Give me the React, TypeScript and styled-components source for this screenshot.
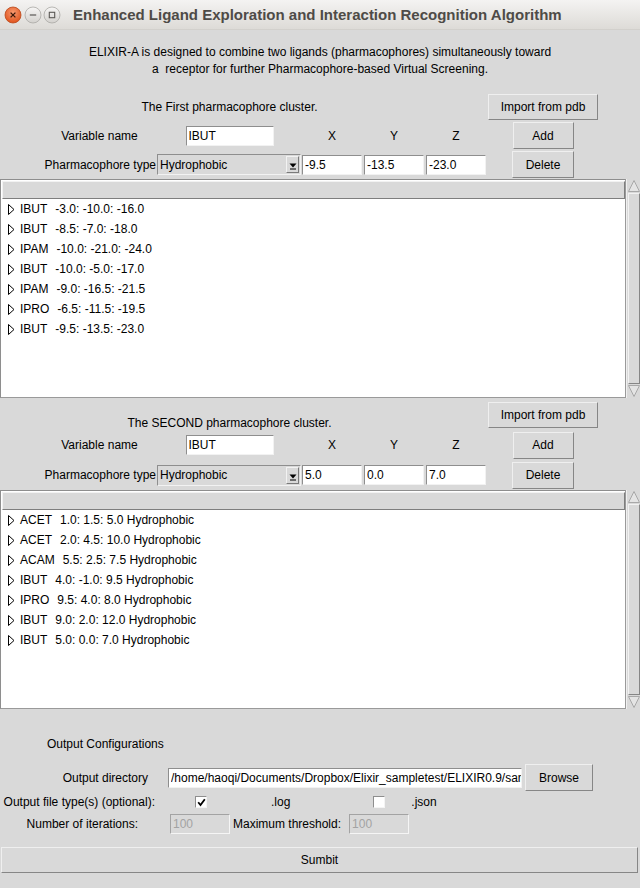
import React from "react";
import styled, { createGlobalStyle } from "styled-components";

type Point = { name: string; coords: string };

const firstCluster: Point[] = [
  { name: "IBUT", coords: "-3.0: -10.0: -16.0" },
  { name: "IBUT", coords: "-8.5: -7.0: -18.0" },
  { name: "IPAM", coords: "-10.0: -21.0: -24.0" },
  { name: "IBUT", coords: "-10.0: -5.0: -17.0" },
  { name: "IPAM", coords: "-9.0: -16.5: -21.5" },
  { name: "IPRO", coords: "-6.5: -11.5: -19.5" },
  { name: "IBUT", coords: "-9.5: -13.5: -23.0" },
];

const secondCluster: Point[] = [
  { name: "ACET", coords: "1.0: 1.5: 5.0 Hydrophobic" },
  { name: "ACET", coords: "2.0: 4.5: 10.0 Hydrophobic" },
  { name: "ACAM", coords: "5.5: 2.5: 7.5 Hydrophobic" },
  { name: "IBUT", coords: "4.0: -1.0: 9.5 Hydrophobic" },
  { name: "IPRO", coords: "9.5: 4.0: 8.0 Hydrophobic" },
  { name: "IBUT", coords: "9.0: 2.0: 12.0 Hydrophobic" },
  { name: "IBUT", coords: "5.0: 0.0: 7.0 Hydrophobic" },
];

const GlobalStyle = createGlobalStyle`
  html, body {
    margin: 0;
    padding: 0;
    background: #d9d9d9;
  }
  body {
    font-family: "Liberation Sans", Arial, sans-serif;
    font-size: 12px;
    color: #000;
  }
  * {
    box-sizing: border-box;
  }
`;

const Window = styled.div`
  width: 640px;
  height: 888px;
  overflow: hidden;
  background: #d9d9d9;
  display: flex;
  flex-direction: column;
`;

const TitleBar = styled.div`
  height: 30px;
  flex: none;
  display: flex;
  align-items: center;
  padding-left: 4px;
  background: linear-gradient(#f4f3f2, #dddbd7);
  border-bottom: 1px solid #d2d0cc;
`;

const WinButton = styled.svg<{ $ml?: number }>`
  flex: none;
  margin-left: ${(p) => p.$ml ?? 0}px;
`;

const WindowTitle = styled.div`
  margin-left: 12px;
  font-family: "Liberation Sans", Arial, sans-serif;
  font-weight: bold;
  font-size: 15px;
  color: #4e4b47;
  white-space: nowrap;
`;

const Intro = styled.div`
  padding: 14px 0 14px;
  text-align: center;
  line-height: 17px;
  white-space: pre;
`;

const ClusterGrid = styled.div<{ $rowH: number; $mt?: number }>`
  display: grid;
  margin-left: 42px;
  margin-top: ${(p) => p.$mt ?? 0}px;
  grid-template-columns: 115px 145px 62px 62px 62px 110px;
  grid-auto-rows: ${(p) => p.$rowH}px;
  align-items: center;
`;

const Heading = styled.div<{ $low?: boolean }>`
  grid-column: 2;
  justify-self: center;
  align-self: ${(p) => (p.$low ? "end" : "center")};
  line-height: 14px;
  white-space: nowrap;
`;

const FieldLabel = styled.div<{ $right?: boolean }>`
  justify-self: ${(p) => (p.$right ? "end" : "center")};
  margin-right: ${(p) => (p.$right ? 1 : 0)}px;
  white-space: nowrap;
`;

const AxisLabel = styled.div`
  justify-self: center;
  margin-right: 2px;
`;

const Entry = styled.input<{ $w: number; $center?: boolean; $ml?: number }>`
  width: ${(p) => p.$w}px;
  height: 20px;
  margin-left: ${(p) => p.$ml ?? 0}px;
  justify-self: ${(p) => (p.$center ? "center" : "start")};
  padding: 0 0 0 2px;
  font: 12px "Liberation Sans", Arial, sans-serif;
  color: #000;
  background: #fff;
  border: 1px solid;
  border-color: #8e8e8e #f2f2f2 #f2f2f2 #8e8e8e;
  border-radius: 0;
  outline: none;

  &:disabled {
    background: #d9d9d9;
    color: #a3a3a3;
    border-color: #a3a3a3 #f5f5f5 #f5f5f5 #a3a3a3;
  }
`;

const TkButton = styled.button<{ $w?: number; $h?: number; $col?: number; $ml?: number }>`
  ${(p) => (p.$col ? `grid-column: ${p.$col};` : "")}
  justify-self: center;
  width: ${(p) => (p.$w ? `${p.$w}px` : "auto")};
  height: ${(p) => p.$h ?? 26}px;
  margin-left: ${(p) => p.$ml ?? 0}px;
  padding: 0;
  font: 12px "Liberation Sans", Arial, sans-serif;
  color: #000;
  background: #d9d9d9;
  border: 1px solid;
  border-color: #efefef #868686 #868686 #efefef;
  border-radius: 0;
`;

const Combo = styled.div`
  width: 144px;
  height: 21px;
  display: flex;
  align-items: center;
  padding-left: 2px;
  background: #d9d9d9;
  border: 1px solid;
  border-color: #8e8e8e #f2f2f2 #f2f2f2 #8e8e8e;
`;

const ComboText = styled.span`
  flex: 1;
`;

const ComboArrow = styled.span`
  width: 13px;
  height: 17px;
  margin-right: 1px;
  display: flex;
  align-items: flex-end;
  justify-content: center;
  padding-bottom: 2px;
  border: 1px solid;
  border-color: #f2f2f2 #7a7a7a #7a7a7a #f2f2f2;
`;

const ListFrame = styled.div<{ $h: number }>`
  display: flex;
  height: ${(p) => p.$h}px;
  flex: none;
`;

const ListBody = styled.div`
  flex: 1;
  display: flex;
  flex-direction: column;
  background: #fff;
  border: 1px solid;
  border-color: #8e8e8e #9a9a9a #9a9a9a #8e8e8e;
  padding: 1px 0 0 1px;
  overflow: hidden;
`;

const ListHeader = styled.div`
  height: 18px;
  flex: none;
  background: #d9d9d9;
  border: 1px solid;
  border-color: #f2f2f2 #7e7e7e #7e7e7e #f2f2f2;
`;

const Item = styled.div`
  height: 20px;
  flex: none;
  display: flex;
  align-items: center;
  padding-left: 6px;
  white-space: pre;
`;

const Coords = styled.span`
  margin-left: 8px;
`;

const ScrollBar = styled.div`
  width: 14px;
  flex: none;
  display: flex;
  flex-direction: column;
  padding: 1px 0 1px 1px;
  background: #d9d9d9;
  border-left: 1px solid #f0f0f0;
`;

const ScrollThumb = styled.div`
  flex: 1;
  margin: 1px 0;
  border: 1px solid;
  border-color: #f2f2f2 #868686 #868686 #f2f2f2;
  background: #d9d9d9;
`;

const Bottom = styled.div`
  padding-top: 27px;
  display: flex;
  flex-direction: column;
`;

const SectionTitle = styled.div`
  padding-left: 47px;
  line-height: 16px;
`;

const Row = styled.div<{ $h: number; $mt?: number }>`
  display: flex;
  align-items: center;
  height: ${(p) => p.$h}px;
  margin-top: ${(p) => p.$mt ?? 0}px;
  white-space: nowrap;
`;

const RowLabel = styled.span<{ $pr: number }>`
  width: 168px;
  flex: none;
  text-align: right;
  padding-right: ${(p) => p.$pr}px;
`;

const Text = styled.span<{ $ml?: number }>`
  margin-left: ${(p) => p.$ml ?? 0}px;
`;

const CheckBox = styled.span<{ $ml: number }>`
  width: 12px;
  height: 12px;
  flex: none;
  margin-left: ${(p) => p.$ml}px;
  display: flex;
  align-items: center;
  justify-content: center;
  background: #fff;
  border: 1px solid;
  border-color: #8e8e8e #f4f4f4 #f4f4f4 #8e8e8e;
`;

const SubmitButton = styled(TkButton)`
  margin: 13px 2px 0 1px;
  width: auto;
`;

const DownArrow = () => (
  <svg width="8" height="7" viewBox="0 0 8 7">
    <polygon points="0.5,0.5 7.5,0.5 4,4.5" fill="#000" />
    <rect x="1" y="5.5" width="6" height="1" fill="#000" />
  </svg>
);

const Disclosure = () => (
  <svg width="7" height="11" viewBox="0 0 7 11" style={{ marginRight: 5, flex: "none" }}>
    <polygon points="0.5,0.5 6,5.5 0.5,10.5" fill="none" stroke="#000" strokeWidth="1" />
  </svg>
);

const ScrollArrow = ({ up }: { up?: boolean }) => (
  <svg width="12" height="12" viewBox="0 0 12 12" style={{ flex: "none" }}>
    {up ? (
      <polygon points="6,0.5 11.5,11.5 0.5,11.5" fill="#e4e4e4" stroke="#a8a8a8" strokeWidth="1" />
    ) : (
      <polygon points="0.5,0.5 11.5,0.5 6,11.5" fill="#e4e4e4" stroke="#a8a8a8" strokeWidth="1" />
    )}
  </svg>
);

const Check = () => (
  <svg width="9" height="9" viewBox="0 0 9 9">
    <path d="M1.2 4.2 L3.5 7 L7.8 1.2" fill="none" stroke="#000" strokeWidth="1.8" />
  </svg>
);

const PointList = ({ items }: { items: Point[] }) => (
  <ListFrame $h={219}>
    <ListBody>
      <ListHeader />
      {items.map((it, i) => (
        <Item key={i}>
          <Disclosure />
          {it.name}
          <Coords>{it.coords}</Coords>
        </Item>
      ))}
    </ListBody>
    <ScrollBar>
      <ScrollArrow up />
      <ScrollThumb />
      <ScrollArrow />
    </ScrollBar>
  </ListFrame>
);

type ClusterProps = {
  title: string;
  low?: boolean;
  rowH: number;
  mt?: number;
  xyz: [string, string, string];
};

const ClusterForm = ({ title, low, rowH, mt, xyz }: ClusterProps) => (
  <ClusterGrid $rowH={rowH} $mt={mt}>
    <Heading $low={low}>{title}</Heading>
    <TkButton $col={6} $w={110} $h={26}>
      Import from pdb
    </TkButton>

    <FieldLabel>Variable name</FieldLabel>
    <Entry $w={88} $center defaultValue="IBUT" />
    <AxisLabel>X</AxisLabel>
    <AxisLabel>Y</AxisLabel>
    <AxisLabel>Z</AxisLabel>
    <TkButton $w={61} $h={27}>
      Add
    </TkButton>

    <FieldLabel $right>Pharmacophore type</FieldLabel>
    <Combo>
      <ComboText>Hydrophobic</ComboText>
      <ComboArrow>
        <DownArrow />
      </ComboArrow>
    </Combo>
    <Entry $w={60} defaultValue={xyz[0]} />
    <Entry $w={60} defaultValue={xyz[1]} />
    <Entry $w={60} defaultValue={xyz[2]} />
    <TkButton $w={62} $h={27}>
      Delete
    </TkButton>
  </ClusterGrid>
);

const App = () => {
  return (
    <Window>
      <GlobalStyle />
      <TitleBar>
        <WinButton width="18" height="18" viewBox="0 0 18 18">
          <defs>
            <radialGradient id="closeFill" cx="50%" cy="35%" r="65%">
              <stop offset="0" stopColor="#f89a70" />
              <stop offset="1" stopColor="#e0521b" />
            </radialGradient>
          </defs>
          <circle cx="9" cy="9" r="8" fill="url(#closeFill)" stroke="#b9471b" strokeWidth="0.8" />
          <path d="M6.6 6.6 L11.4 11.4 M11.4 6.6 L6.6 11.4" stroke="#3d1a0c" strokeWidth="1.3" />
        </WinButton>
        <WinButton $ml={2} width="18" height="18" viewBox="0 0 18 18">
          <defs>
            <linearGradient id="greyFill" x1="0" y1="0" x2="0" y2="1">
              <stop offset="0" stopColor="#f7f6f5" />
              <stop offset="1" stopColor="#d3d1cd" />
            </linearGradient>
          </defs>
          <circle cx="9" cy="9" r="8" fill="url(#greyFill)" stroke="#aaa8a4" strokeWidth="0.8" />
          <path d="M5.8 9 H12.2" stroke="#5b5955" strokeWidth="1.2" />
        </WinButton>
        <WinButton $ml={1} width="18" height="18" viewBox="0 0 18 18">
          <circle cx="9" cy="9" r="8" fill="url(#greyFill)" stroke="#aaa8a4" strokeWidth="0.8" />
          <rect x="6.3" y="6.3" width="5.4" height="5.4" fill="none" stroke="#5b5955" strokeWidth="1.1" />
        </WinButton>
        <WindowTitle>Enhanced Ligand Exploration and Interaction Recognition Algorithm</WindowTitle>
      </TitleBar>

      <Intro>
        {"ELIXIR-A is designed to combine two ligands (pharmacophores) simultaneously toward\na  receptor for further Pharmacophore-based Virtual Screening."}
      </Intro>

      <ClusterForm title="The First pharmacophore cluster." rowH={29} xyz={["-9.5", "-13.5", "-23.0"]} />
      <PointList items={firstCluster} />

      <ClusterForm
        title="The SECOND pharmacophore cluster."
        low
        rowH={30}
        mt={2}
        xyz={["5.0", "0.0", "7.0"]}
      />
      <PointList items={secondCluster} />

      <Bottom>
        <SectionTitle>Output Configurations</SectionTitle>
        <Row $h={27} $mt={12}>
          <RowLabel $pr={20}>Output directory</RowLabel>
          <Entry $w={354} defaultValue="/home/haoqi/Documents/Dropbox/Elixir_sampletest/ELIXIR0.9/sample" />
          <TkButton $w={68} $h={27} $ml={3}>
            Browse
          </TkButton>
        </Row>
        <Row $h={22}>
          <RowLabel $pr={13}>Output file type(s) (optional):</RowLabel>
          <CheckBox $ml={27}>
            <Check />
          </CheckBox>
          <Text $ml={64}>.log</Text>
          <CheckBox $ml={83} />
          <Text $ml={26}>.json</Text>
        </Row>
        <Row $h={21}>
          <RowLabel $pr={30}>Number of iterations:</RowLabel>
          <Entry $w={60} $ml={2} disabled defaultValue="100" />
          <Text $ml={3}>Maximum threshold:</Text>
          <Entry $w={60} $ml={8} disabled defaultValue="100" />
        </Row>
        <SubmitButton $h={26}>Sumbit</SubmitButton>
      </Bottom>
    </Window>
  );
};

export default App;
